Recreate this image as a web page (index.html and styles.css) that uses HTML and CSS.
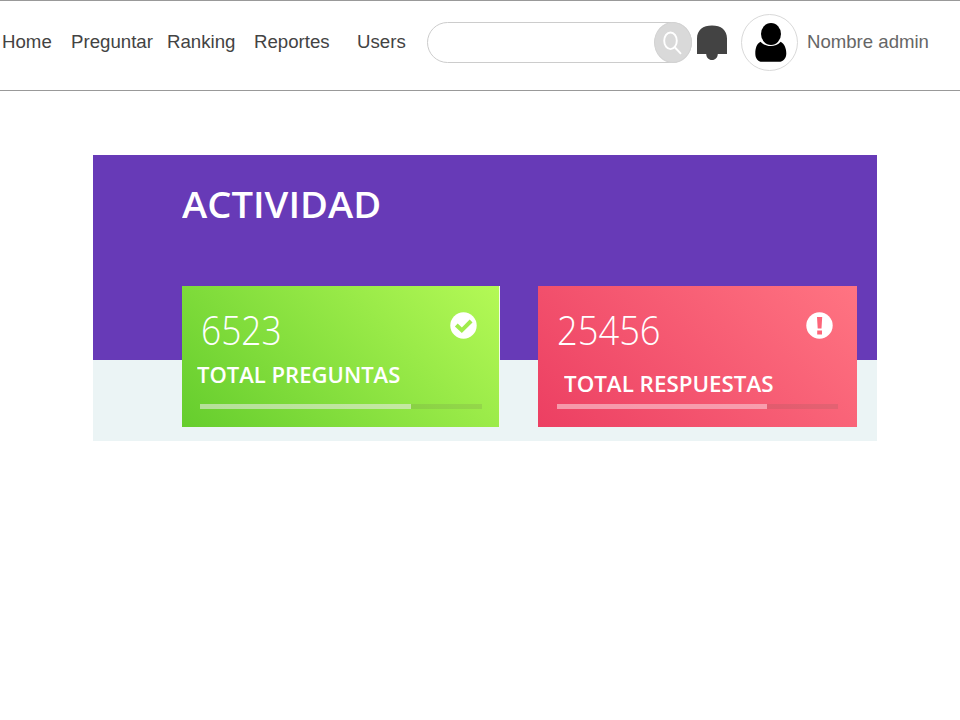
FILE: index.html
```html
<!DOCTYPE html>
<html lang="es">
<head>
<meta charset="utf-8">
<title>Actividad</title>
<link rel="stylesheet" href="styles.css">
</head>
<body>
<header class="topbar">
  <nav class="nav">
    <a class="home">Home</a>
    <a class="ask">Preguntar</a>
    <a class="ranking">Ranking</a>
    <a class="reports">Reportes</a>
    <a class="users">Users</a>
  </nav>
  <div class="search">
    <span class="search-button">
      <svg width="38" height="39" viewBox="0 0 38 39" fill="none" stroke="#fff" stroke-width="1.900"><ellipse cx="15.500" cy="17.800" rx="6.300" ry="8.300"/><path d="M20 24.500l6 6.300"/></svg>
    </span>
  </div>
  <svg class="bell" width="30" height="36" viewBox="0 0 30 36"><path fill="#434343" d="M0 29V13.500C0 5 6 .500 15 .500S30 5 30 13.500V29H20.800C20.600 32.500 18.500 35 15 35S9.400 32.500 9.200 29Z"/></svg>
  <div class="avatar">
    <svg width="55" height="55" viewBox="0 0 55 55"><path d="M18.500 26.800C14.500 29 13.300 33.500 13.300 38.500C13.300 43.500 16 46.800 20 46.800H37C41 46.800 44.300 43.500 44.300 38.500C44.300 33.500 42.500 29 38.700 26.800C36 29.800 32.500 31 28.800 31S21 29.500 18.500 26.800Z"/><ellipse cx="29" cy="19" rx="10" ry="11"/></svg>
  </div>
  <span class="username">Nombre admin</span>
</header>
<main class="panel">
  <h1 class="title">ACTIVIDAD</h1>
  <div class="cards">
    <section class="card green">
      <div class="card-top">
        <span class="number">6523</span>
        <svg width="27" height="27" viewBox="0 0 27 27"><circle cx="13.500" cy="13.500" r="13.200" fill="#fff"/><path d="M6.300 13l5.500 5.300 9.300-9.300" fill="none" stroke="#a0ec4c" stroke-width="4"/></svg>
      </div>
      <h2 class="label">TOTAL PREGUNTAS</h2>
      <div class="bar"><div class="fill"></div></div>
    </section>
    <section class="card red">
      <div class="card-top">
        <span class="number">25456</span>
        <svg width="27" height="27" viewBox="0 0 27 27"><circle cx="13.500" cy="13.500" r="13.200" fill="#fff"/><path d="M11 5h5.200l-.7 11.500h-3.800zM11.200 18.500h4.800v4h-4.800z" fill="#fd6579"/></svg>
      </div>
      <h2 class="label">TOTAL RESPUESTAS</h2>
      <div class="bar"><div class="fill"></div></div>
    </section>
  </div>
</main>
</body>
</html>
```
FILE: styles.css
```css
* { box-sizing: border-box; }
body { margin: 0; background: #fff; font-family: "Liberation Sans", Arial, sans-serif; }
svg { display: block; flex: none; }
.topbar {
  display: flex;
  align-items: center;
  height: 91px;
  padding-bottom: 6px;
  border-top: 1px solid #999;
  border-bottom: 1px solid #999;
  font-size: 18.67px;
  line-height: 22px;
  color: #434343;
  white-space: nowrap;
}
.nav { display: flex; width: 427px; flex: none; padding: 0 0 1px 2px; }
.home { width: 69px; }
.ask { width: 96px; }
.ranking { width: 87px; }
.reports { width: 103px; }
.search {
  display: flex;
  justify-content: flex-end;
  width: 265px;
  height: 41px;
  flex: none;
  border: 1px solid #ccc;
  border-radius: 20.5px;
}
.search-button {
  width: 38px;
  height: 41px;
  margin: -1px -1px 0 0;
  border: 1px solid #d2d2d2;
  border-radius: 19px / 20.5px;
  background: #d9d9d9;
}
.bell { margin: 0 14px 0 5px; }
.avatar {
  width: 57px;
  height: 57px;
  flex: none;
  border: 1px solid #d9d9d9;
  border-radius: 50%;
}
.username { margin-left: 9px; padding-bottom: 1px; font-size: 18.6px; color: #666; }
.panel {
  width: 784px;
  height: 286px;
  margin: 64px 0 0 93px;
  padding: 27px 20px 0 89px;
  background: linear-gradient(#673ab7 205px, #ebf4f5 205px);
  color: #fff;
  font-family: "Open Sans", sans-serif;
}
.title {
  margin: 0;
  height: 104px;
  font-size: 36px;
  line-height: 45px;
  font-weight: 630;
  transform-origin: left;
  transform: scaleX(1.06);
}
.cards { display: flex; gap: 39px; }
.card { height: 141px; }
.green {
  width: 317px;
  padding: 26px 17px 0 18px;
  background: linear-gradient(45deg, #65cd2d, #b4f956);
  box-shadow: 1px 0 #f2fbe8;
}
.red {
  width: 319px;
  padding: 26px 19px 0 19px;
  background: linear-gradient(45deg, #ec3f62, #ff7482);
}
.card-top { display: flex; justify-content: space-between; height: 48px; padding-right: 5px; }
.number {
  font-size: 41px;
  font-weight: 300;
  line-height: 34px;
  transform-origin: left;
  transform: scaleX(.885);
}
.green .number { margin-left: 1px; transform: scaleX(.86); }
.label {
  margin: 0 0 0 -3px;
  height: 44px;
  font-size: 21px;
  line-height: 30px;
  font-weight: 630;
  white-space: nowrap;
  transform-origin: left;
  transform: scaleX(1.05);
}
.red .label { margin-left: 7px; padding-top: 9px; transform: scaleX(1.065); }
.bar { height: 5px; background: rgba(100, 90, 80, .14); }
.fill { width: 74.8%; height: 100%; background: rgba(255, 255, 255, .5); }
.red .fill { background: rgba(255, 180, 195, .75); }
```
